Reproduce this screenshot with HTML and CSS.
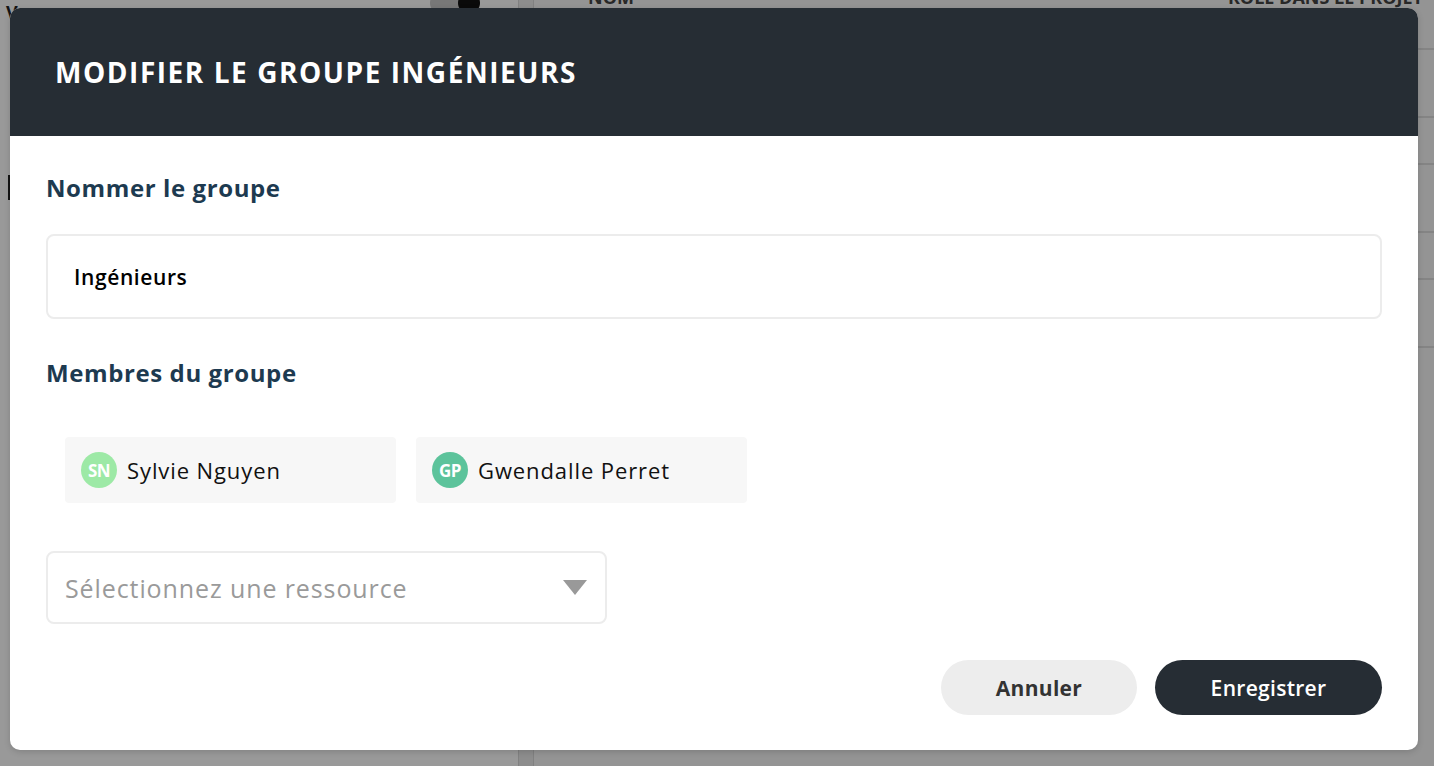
FILE: index.html
```html
<!DOCTYPE html>
<html lang="fr">
<head>
    <meta charset="UTF-8">
    <meta name="viewport" content="width=device-width, initial-scale=1.0">
    <title>Modifier le groupe</title>
    <link rel="stylesheet" href="styles.css">
</head>
<body>
    <div class="page">
        <div class="sidebar">
            <div class="sidebar-top">
                <span class="sidebar-v">V</span>
                <div class="team">
                    <span class="dot"></span>
                    <span class="dot"></span>
                    <span class="dot dark"></span>
                </div>
            </div>
            <div class="sidebar-mark"></div>
        </div>
        <div class="divider"></div>
        <div class="main">
            <div class="table-head">
                <span class="col-name">NOM</span>
                <span class="col-role">RÔLE DANS LE PROJET</span>
            </div>
            <div class="row tall"></div>
            <div class="row"></div>
            <div class="row tall"></div>
            <div class="row"></div>
            <div class="row tall"></div>
        </div>
    </div>

    <div class="overlay">
        <div class="modal">
            <div class="modal-header">
                <h1>Modifier le groupe Ingénieurs</h1>
            </div>
            <div class="modal-body">
                <label class="field-label">Nommer le groupe</label>
                <div class="text-input">Ingénieurs</div>

                <label class="field-label members-label">Membres du groupe</label>
                <div class="members">
                    <div class="member">
                        <span class="avatar sn">SN</span>
                        <span class="member-name">Sylvie Nguyen</span>
                    </div>
                    <div class="member">
                        <span class="avatar gp">GP</span>
                        <span class="member-name">Gwendalle Perret</span>
                    </div>
                </div>

                <div class="select">
                    <span class="placeholder">Sélectionnez une ressource</span>
                    <span class="caret"></span>
                </div>

                <div class="actions">
                    <button class="btn btn-cancel">Annuler</button>
                    <button class="btn btn-save">Enregistrer</button>
                </div>
            </div>
        </div>
    </div>
</body>
</html>
```

FILE: styles.css
```css
body {
    margin: 0;
    font-family: "Open Sans", "Liberation Sans", sans-serif;
    width: 1434px;
    height: 766px;
    overflow: hidden;
    position: relative;
    background-color: #f2f2f2;
}

/* page behind the modal */
.page {
    display: flex;
    height: 766px;
}

.sidebar {
    width: 518px;
    background-color: #ffffff;
}

.sidebar-top {
    display: flex;
    justify-content: space-between;
    align-items: flex-start;
    padding: 0 38px 0 6px;
    height: 30px;
}

.sidebar-v {
    font-weight: 700;
    font-size: 18px;
    color: #222;
}

.team {
    display: flex;
    margin-top: -8px;
}

.dot {
    width: 22px;
    height: 22px;
    border-radius: 50%;
    background-color: #c8c8c8;
    margin-left: -8px;
}

.dot.dark {
    background-color: #111;
}

.sidebar-mark {
    margin-top: 145px;
    width: 3px;
    height: 25px;
    margin-left: 8px;
    background-color: #222;
}

.divider {
    width: 14px;
    background-color: #ebebeb;
    border-left: 1px solid #d8d8d8;
    border-right: 1px solid #d8d8d8;
}

.main {
    flex: 1;
    background-color: #f7f7f7;
}

.table-head {
    display: flex;
    height: 48px;
    border-bottom: 2px solid #ddd;
    align-items: flex-start;
    font-weight: 700;
    font-size: 18px;
    line-height: 18px;
    color: #444;
}

.table-head span {
    margin-top: -12px;
    white-space: nowrap;
}

.col-name {
    margin-left: 54px;
}

.col-role {
    margin-left: 594px;
}

.row {
    height: 45px;
    border-bottom: 2px solid #ddd;
}

.row.tall {
    height: 66px;
}

/* modal */
.overlay {
    position: absolute;
    top: 0;
    left: 0;
    right: 0;
    bottom: 0;
    background-color: rgba(0, 0, 0, 0.4);
    padding: 8px 16px 16px 10px;
}

.modal {
    background-color: #fff;
    border-radius: 10px;
    overflow: hidden;
    height: 742px;
    box-shadow: 0 2px 6px rgba(0, 0, 0, 0.15);
}

.modal-header {
    background-color: #262d34;
    height: 128px;
    display: flex;
    align-items: center;
    padding-left: 45px;
}

.modal-header h1 {
    margin: 0;
    color: #fff;
    font-size: 28px;
    font-weight: 700;
    text-transform: uppercase;
    letter-spacing: 1.55px;
}

.modal-body {
    padding: 37px 36px 0 36px;
}

.field-label {
    display: block;
    font-size: 24px;
    line-height: 30px;
    font-weight: 700;
    letter-spacing: 0.6px;
    color: #1d3a50;
}

.text-input {
    margin-top: 31px;
    height: 81px;
    border: 2px solid #ececec;
    border-radius: 8px;
    padding-left: 26px;
    display: flex;
    align-items: center;
    font-size: 21px;
    font-weight: 600;
    letter-spacing: 0.6px;
    color: #000;
}

.members-label {
    margin-top: 39px;
}

.members {
    display: flex;
    gap: 20px;
    margin-top: 49px;
    padding-left: 19px;
}

.member {
    width: 315px;
    height: 66px;
    background-color: #f7f7f7;
    border-radius: 4px;
    display: flex;
    align-items: center;
    padding-left: 16px;
    gap: 10px;
}

.avatar {
    width: 36px;
    height: 36px;
    border-radius: 50%;
    color: #fff;
    font-size: 17px;
    font-weight: 700;
    letter-spacing: -0.5px;
    display: flex;
    align-items: center;
    justify-content: center;
}

.avatar.sn {
    background-color: #9de9a6;
}

.avatar.gp {
    background-color: #5cc39b;
}

.member-name {
    font-size: 22px;
    letter-spacing: 0.9px;
    color: #111;
}

.select {
    margin-top: 48px;
    width: 522px;
    height: 69px;
    border: 2px solid #ececec;
    border-radius: 8px;
    display: flex;
    align-items: center;
    justify-content: space-between;
    padding: 0 18px 0 17px;
}

.placeholder {
    font-size: 25px;
    letter-spacing: 0.9px;
    color: #9a9a9a;
}

.caret {
    width: 0;
    height: 0;
    border-left: 12px solid transparent;
    border-right: 12px solid transparent;
    border-top: 15px solid #999;
}

.actions {
    display: flex;
    justify-content: flex-end;
    gap: 18px;
    margin-top: 36px;
}

.btn {
    height: 55px;
    border: none;
    border-radius: 28px;
    font-family: inherit;
    font-size: 21px;
    font-weight: 700;
    letter-spacing: 0.3px;
    cursor: pointer;
}

.btn-cancel {
    width: 196px;
    background-color: #ededed;
    color: #333;
}

.btn-save {
    width: 227px;
    background-color: #262d34;
    color: #fff;
    font-weight: 600;
}
```
